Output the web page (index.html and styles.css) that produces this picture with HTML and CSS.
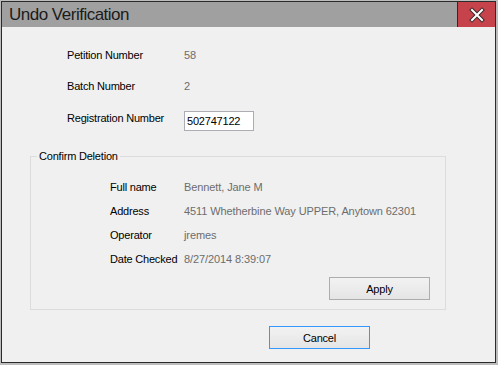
FILE: index.html
```html
<!DOCTYPE html>
<html lang="en">
<head>
    <meta charset="UTF-8">
    <meta name="viewport" content="width=device-width, initial-scale=1.0">
    <title>Undo Verification</title>
    <link rel="stylesheet" href="styles.css">
</head>
<body>
    <div class="window">
        <div class="titlebar">
            <span class="title">Undo Verification</span>
            <button class="close" title="Close">
                <svg width="16" height="16" viewBox="0 0 16 16">
                    <path d="M3 3 L13 13 M13 3 L3 13" stroke="#3a2a2c" stroke-width="4" stroke-linecap="square"/>
                    <path d="M3 3 L13 13 M13 3 L3 13" stroke="#ffffff" stroke-width="2" stroke-linecap="square"/>
                </svg>
            </button>
        </div>
        <div class="content">
            <div class="fields">
                <div class="row">
                    <span class="label">Petition Number</span>
                    <span class="value">58</span>
                </div>
                <div class="row">
                    <span class="label">Batch Number</span>
                    <span class="value">2</span>
                </div>
                <div class="row row-input">
                    <span class="label">Registration Number</span>
                    <input type="text" class="textbox" value="502747122">
                </div>
            </div>
            <fieldset class="group">
                <legend>Confirm Deletion</legend>
                <div class="info">
                    <span class="label">Full name</span>
                    <span class="value">Bennett, Jane M</span>
                    <span class="label">Address</span>
                    <span class="value">4511 Whetherbine Way UPPER, Anytown 62301</span>
                    <span class="label">Operator</span>
                    <span class="value">jremes</span>
                    <span class="label">Date Checked</span>
                    <span class="value">8/27/2014 8:39:07</span>
                </div>
                <div class="actions">
                    <button class="btn">Apply</button>
                </div>
            </fieldset>
            <div class="footer">
                <button class="btn btn-default">Cancel</button>
            </div>
        </div>
    </div>
</body>
</html>
```

FILE: styles.css
```css
html, body {
    margin: 0;
    padding: 0;
}
body {
    background: #bdbdbd;
    font-family: "Liberation Sans", Arial, sans-serif;
    font-size: 11px;
    color: #000;
}
.window {
    margin: 1px 2px 2px 1px;
    width: 493px;
    height: 360px;
    border: 1px solid #2b2b2b;
    display: flex;
    flex-direction: column;
}
.titlebar {
    display: flex;
    height: 25px;
    background: #a0a0a0;
}
.title {
    flex: 1;
    padding-left: 7px;
    font-size: 17px;
    letter-spacing: -0.5px;
    line-height: 25px;
    color: #1b1b1b;
}
.close {
    width: 38px;
    margin: 0;
    padding: 0;
    border: none;
    border-left: 1px solid #2b2b2b;
    background: #c7434b;
    display: flex;
    align-items: center;
    justify-content: center;
}
.content {
    flex: 1;
    background: #f0f0f0;
}
.label, legend, .btn, .textbox {
    letter-spacing: -0.2px;
}
.value {
    color: #6d6d6d;
    letter-spacing: -0.1px;
}
.fields {
    padding: 18px 0 0 65px;
}
.row {
    display: flex;
    align-items: center;
    height: 20px;
}
.row + .row {
    margin-top: 11px;
}
.row .label {
    width: 117px;
}
.row-input {
    margin-top: 15px !important;
}
.row-input .label {
    padding-bottom: 6px;
}
.textbox {
    box-sizing: border-box;
    width: 70px;
    height: 20px;
    margin: 0;
    padding: 0 2px;
    border: 1px solid #abadb3;
    background: #fff;
    font-family: inherit;
    font-size: 11px;
    color: #000;
    outline: none;
}
.group {
    box-sizing: border-box;
    width: 416px;
    margin: 19px 0 0 28px;
    padding: 0;
    border: 1px solid #dcdcdc;
}
.group legend {
    margin-left: 6px;
    padding: 0 2px;
    line-height: 13px;
}
.info {
    display: grid;
    grid-template-columns: 74px auto;
    grid-auto-rows: 24px;
    align-items: center;
    padding: 12px 0 0 79px;
}
.actions {
    display: flex;
    justify-content: flex-end;
    padding: 6px 15px 9px 0;
}
.btn {
    box-sizing: border-box;
    width: 101px;
    height: 23px;
    margin: 0;
    padding: 0;
    border: 1px solid #adadad;
    background: linear-gradient(#f2f2f2, #e5e5e5);
    font-family: inherit;
    font-size: 11px;
    color: #000;
}
.btn-default {
    border-color: #3399ff;
}
.footer {
    padding: 16px 0 0 267px;
}
```
